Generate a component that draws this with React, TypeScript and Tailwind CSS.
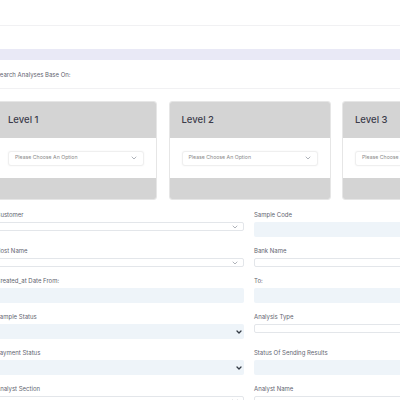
import React from "react";

const font = { fontFamily: "Inter, 'Noto Sans', sans-serif" };

function Chevron({ dark }: { dark?: boolean }) {
  return (
    <svg width="6" height="4" viewBox="0 0 6 4" className="shrink-0">
      <path
        d="M1 1 L3 3 L5 1"
        fill="none"
        stroke={dark ? "#333a44" : "#9aa0a8"}
        strokeWidth={dark ? 1.3 : 0.8}
        strokeLinecap="round"
        strokeLinejoin="round"
      />
    </svg>
  );
}

function LevelCard({ title }: { title: string }) {
  return (
    <div className="w-[162px] shrink-0 flex flex-col rounded-[3px] border border-[#e6e6e6] overflow-hidden bg-white">
      <div className="h-[36px] bg-[#d4d4d4] flex items-center px-[12px]">
        <span className="text-[9.5px] font-medium text-[#3b3b4a]">{title}</span>
      </div>
      <div className="h-[40px] flex items-center px-[12px]">
        <div className="w-full h-[15px] bg-white border border-[#efefef] rounded-[3px] shadow-[0_0_2px_rgba(0,0,0,0.06)] flex items-center justify-between pl-[6px] pr-[6px]">
          <span className="text-[5.2px] text-[#8a8a8a] whitespace-nowrap">Please Choose An Option</span>
          <Chevron />
        </div>
      </div>
      <div className="h-[21px] bg-[#d4d4d4]" />
    </div>
  );
}

type FieldKind = "selShort" | "selBlue" | "blue" | "boxShort";

function Field({ label, kind }: { label: string; kind: FieldKind }) {
  let input: React.ReactNode = null;
  if (kind === "selShort") {
    input = (
      <div className="h-[9px] bg-white border border-[#e3e6ea] rounded-[2px] flex items-center justify-end pr-[5px]">
        <Chevron />
      </div>
    );
  } else if (kind === "selBlue") {
    input = (
      <div className="h-[15px] bg-[#eef4f9] rounded-[2px] flex items-center justify-end pr-[2px]">
        <Chevron dark />
      </div>
    );
  } else if (kind === "blue") {
    input = <div className="h-[15px] bg-[#eef4f9] rounded-[2px]" />;
  } else {
    input = <div className="h-[9px] bg-white border border-[#e3e6ea] rounded-[2px]" />;
  }
  return (
    <div className="flex flex-col">
      <div className="h-[8px] leading-[8px] text-[6px] text-[#5f6570] mb-[3px] whitespace-nowrap">{label}</div>
      {input}
    </div>
  );
}

export default function App() {
  return (
    <div className="w-[400px] h-[400px] overflow-hidden bg-white" style={font}>
      <div className="h-[26px] border-b border-[#f1f1f3]" />
      <div className="h-[23px]" />
      <div className="h-[11px] bg-[#e9e9f6]" />
      <div className="ml-[-4px] h-[29px] border-b border-[#f1f1f3] flex items-center pt-[1px]">
        <span className="text-[6px] text-[#5f6570]">Search Analyses Base On:</span>
      </div>
      <div className="ml-[-5px] mt-[12px] flex gap-[11.5px]">
        <LevelCard title="Level 1" />
        <LevelCard title="Level 2" />
        <LevelCard title="Level 3" />
      </div>
      <div className="ml-[-4px] mt-[11px] grid grid-cols-[248px_248px] gap-x-[10px] gap-y-[10px] items-start">
        <Field label="Customer" kind="selShort" />
        <Field label="Sample Code" kind="blue" />
        <Field label="Host Name" kind="selShort" />
        <Field label="Bank Name" kind="boxShort" />
        <Field label="Created_at Date From:" kind="blue" />
        <Field label="To:" kind="blue" />
        <Field label="Sample Status" kind="selBlue" />
        <Field label="Analysis Type" kind="boxShort" />
        <Field label="Payment Status" kind="selBlue" />
        <Field label="Status Of Sending Results" kind="blue" />
        <Field label="Analyst Section" kind="selShort" />
        <Field label="Analyst Name" kind="boxShort" />
      </div>
    </div>
  );
}
